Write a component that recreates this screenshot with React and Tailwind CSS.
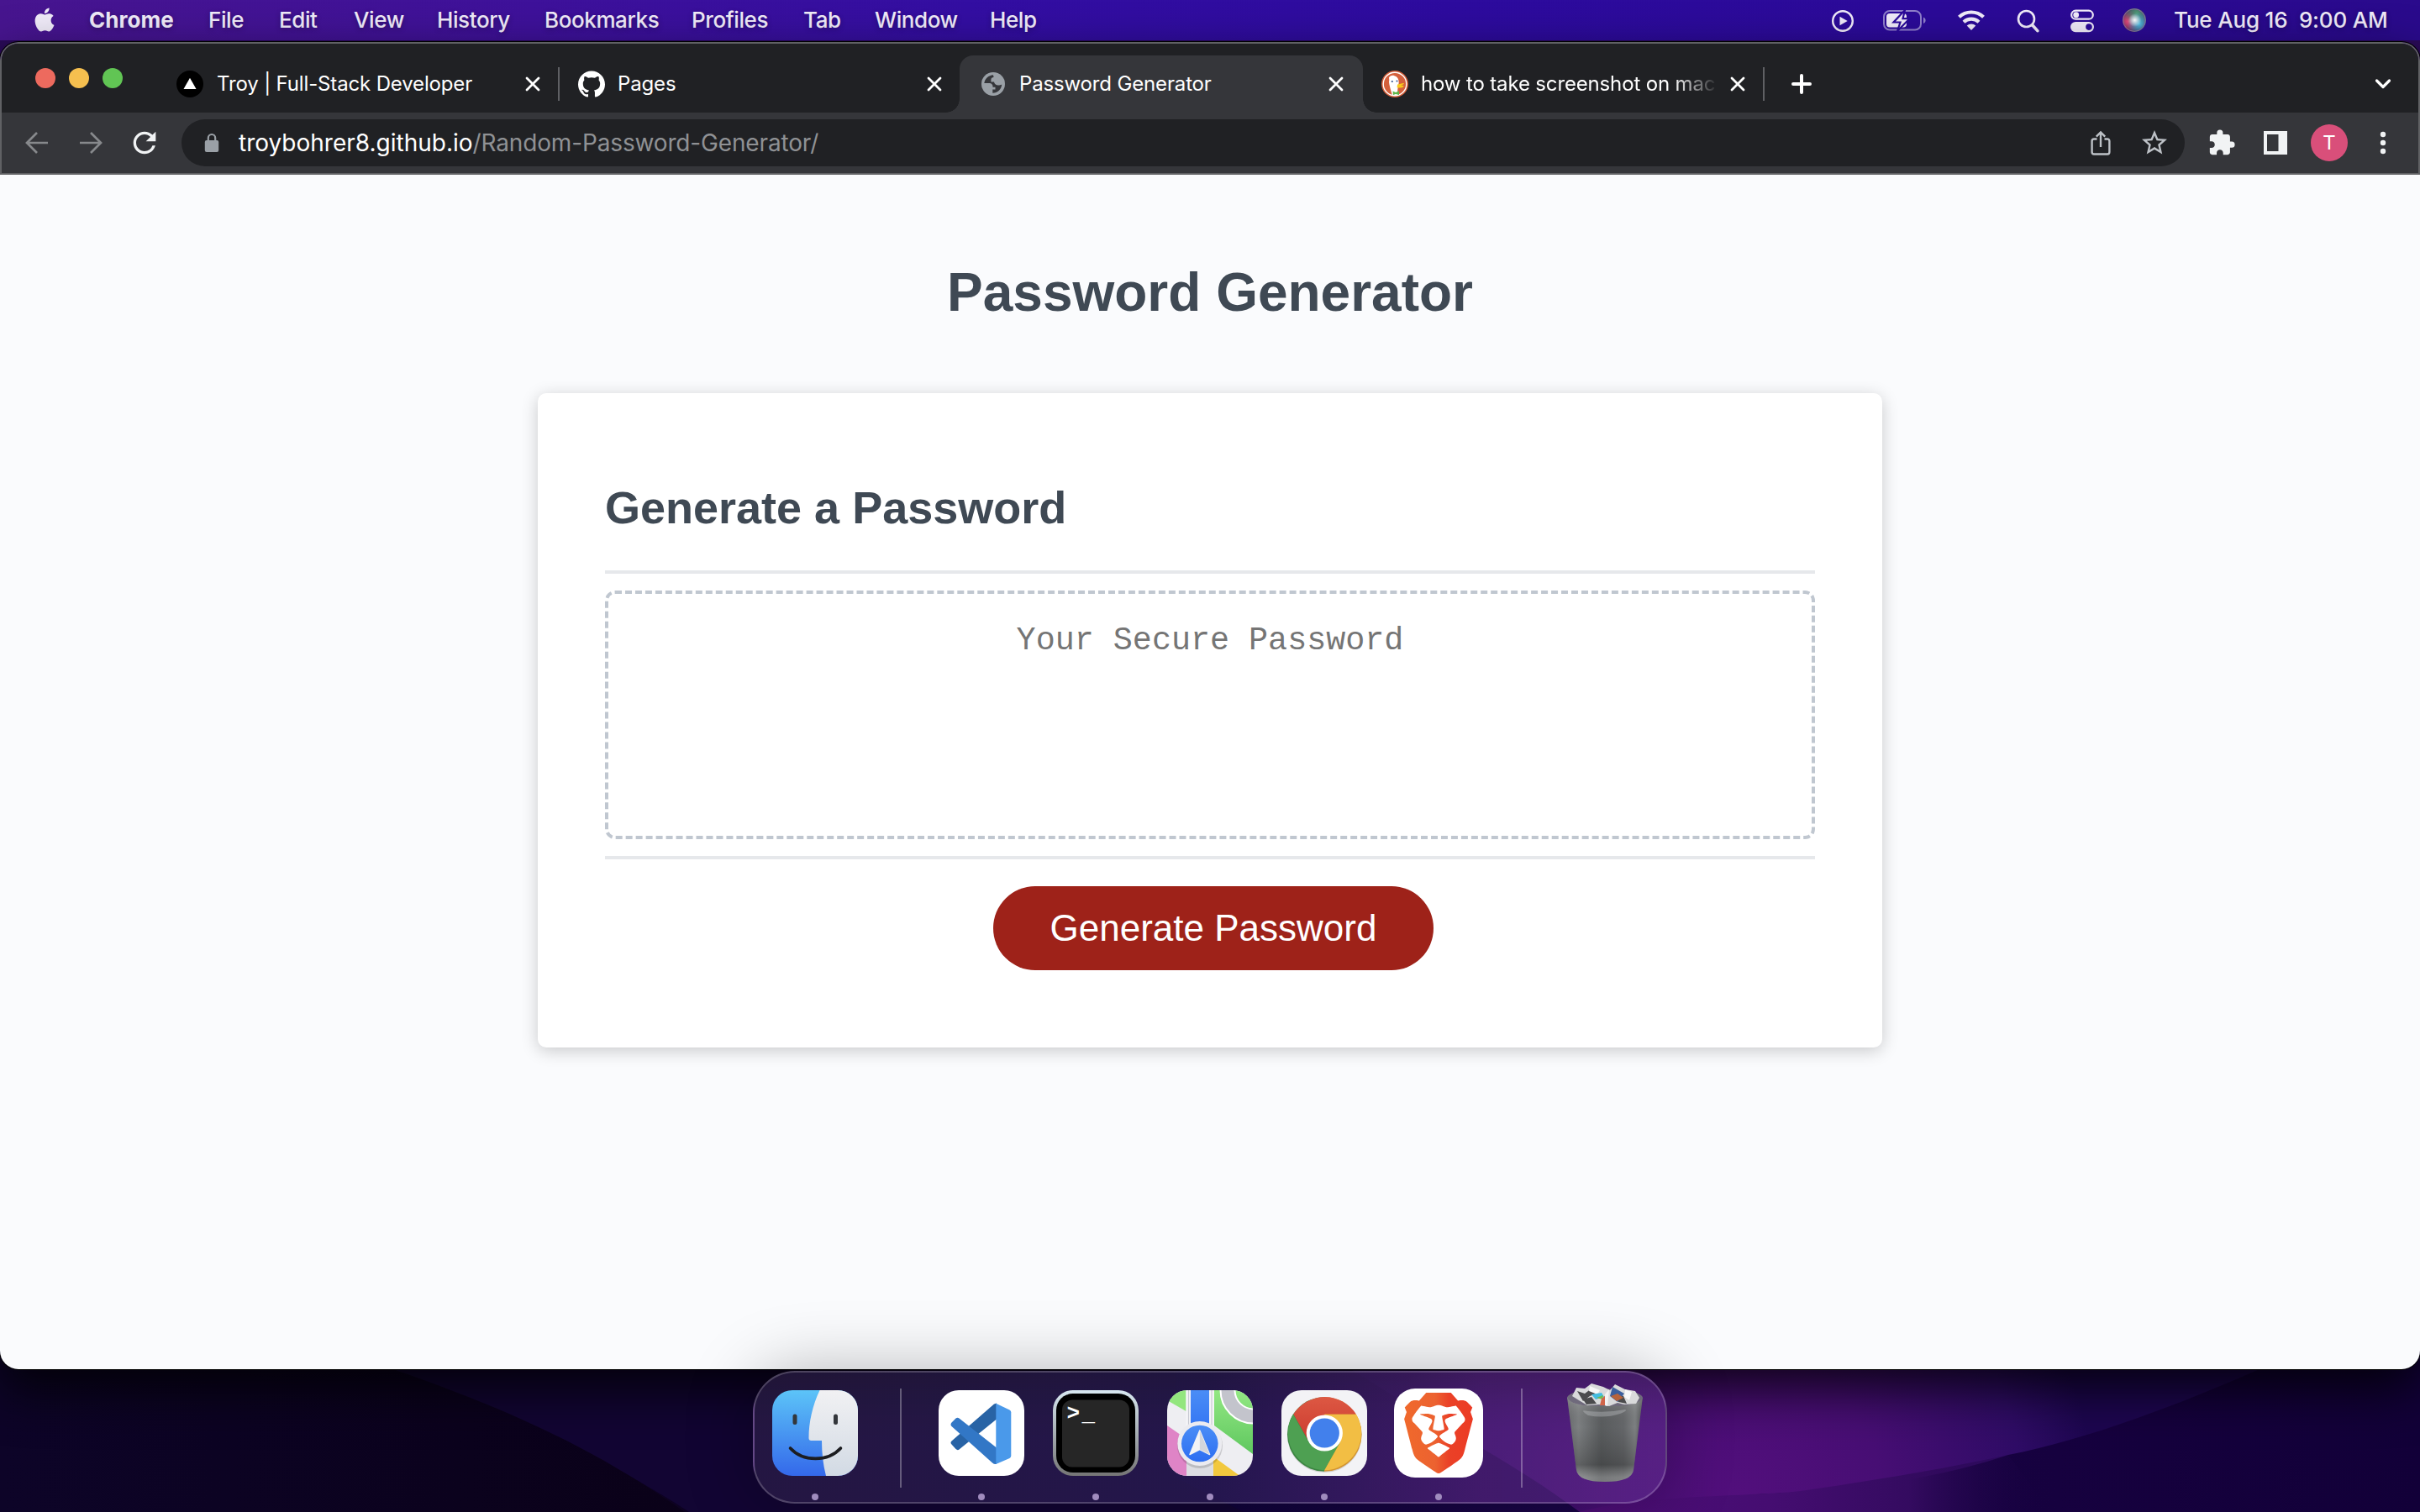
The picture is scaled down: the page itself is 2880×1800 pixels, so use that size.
import React from "react";
import { SiApple, SiGithub, SiBrave } from "react-icons/si";
import { MdExtension, MdRefresh, MdLock, MdStarBorder } from "react-icons/md";

function Wallpaper() {
  return (
    <svg className="absolute inset-0 h-[1800px] w-[2880px]" viewBox="0 0 2880 1800" aria-hidden="true">
      <defs>
        <linearGradient id="wp" x1="0" x2="1" y1="0" y2="0">
          <stop offset="0" stopColor="#0d0326" />
          <stop offset=".3" stopColor="#0d0221" />
          <stop offset=".5" stopColor="#10033a" />
          <stop offset=".64" stopColor="#1a0548" />
          <stop offset=".85" stopColor="#16013f" />
          <stop offset="1" stopColor="#120038" />
        </linearGradient>
        <linearGradient id="left" x1="0" x2="1" y1="0" y2="0">
          <stop offset="0" stopColor="#0d0428" />
          <stop offset="1" stopColor="#0a0118" />
        </linearGradient>
        <radialGradient id="glow" gradientUnits="userSpaceOnUse" cx="2070" cy="1780" r="420">
          <stop offset="0" stopColor="#520f7c" />
          <stop offset=".4" stopColor="#470e74" />
          <stop offset=".8" stopColor="#2f0c66" />
          <stop offset="1" stopColor="#1d0650" />
        </radialGradient>
        <linearGradient id="glow2" gradientUnits="userSpaceOnUse" x1="1880" x2="2440" y1="0" y2="0">
          <stop offset="0" stopColor="#4f0e79" />
          <stop offset=".4" stopColor="#450d71" />
          <stop offset=".7" stopColor="#340b60" />
          <stop offset="1" stopColor="#16013f" stopOpacity="0" />
        </linearGradient>
      </defs>
      <rect width="2880" height="1800" fill="url(#wp)" />
      <rect width="2880" height="100" fill="#2a0a58" />
      <path d="M410 1625C560 1670 640 1700 700 1730C750 1757 790 1780 820 1800H1480L1400 1760V1625Z" fill="#120533" />
      <path d="M0 1600H380C560 1660 680 1705 815 1800H0Z" fill="url(#left)" />
      <path d="M1600 1625H2700C2600 1670 2480 1715 2390 1732C2300 1762 2200 1775 2090 1779L2000 1800H1880C1800 1740 1700 1690 1600 1625Z" fill="url(#glow)" />
      <path d="M1880 1800C1960 1778 2100 1782 2150 1774C2260 1758 2330 1745 2390 1732L2440 1800Z" fill="url(#glow2)" />
    </svg>
  );
}

function Menu({ cell, children, bold }) {
  return (
    <div className={cell}>
      <span className={bold ? "font-bold tracking-[0.050px]" : "font-medium tracking-[-0.400px]"}>{children}</span>
    </div>
  );
}

function MenuBar() {
  return (
    <header className="relative flex h-[48px] items-start bg-[linear-gradient(90deg,#47158f_0%,#3e119a_22%,#330ea2_40%,#2d0b9e_60%,#2b0a98_80%,#2a0a8c_100%)] text-[#f0ebf9] [text-shadow:0_2px_6px_rgba(0,0,0,0.3)]">
      <div className="flex h-[47px] w-full items-center text-[26px] whitespace-nowrap">
        <div className="w-[106px] pl-[39px]">
          <SiApple className="h-[33px] w-[28px]" />
        </div>
        <Menu cell="w-[142px]" bold>Chrome</Menu>
        <Menu cell="w-[84px]">File</Menu>
        <Menu cell="w-[89px]">Edit</Menu>
        <Menu cell="w-[99px]">View</Menu>
        <Menu cell="w-[128px]">History</Menu>
        <Menu cell="w-[175px]">Bookmarks</Menu>
        <Menu cell="w-[133px]">Profiles</Menu>
        <Menu cell="w-[85px]">Tab</Menu>
        <Menu cell="w-[137px]">Window</Menu>
        <Menu cell="w-[120px]">Help</Menu>
        <div className="ml-auto flex h-[50px] items-center pt-[3px]">
          <svg className="mr-[34px] h-[28px] w-[28px]" viewBox="0 0 28 28" fill="none">
            <circle cx="14" cy="14" r="11.8" stroke="currentColor" strokeWidth="2.4" />
            <path d="M10.5 8.8v10.4l9.2-5.2z" fill="currentColor" />
          </svg>
          <svg className="mr-[36px] h-[26px] w-[52px]" viewBox="0 0 52 26" fill="none">
            <rect x="1" y="1" width="44" height="22.5" rx="7" stroke="#8f7fcb" strokeWidth="2" />
            <path d="M48 8.5c3.5 1.5 3.5 6 0 7.5z" fill="#8f7fcb" />
            <rect x="4" y="4" width="24" height="16.5" rx="4" fill="currentColor" />
            <path d="M26 0 12.5 14.5h8L17 25 31.5 10.2h-8z" fill="currentColor" stroke="#2b0a9a" strokeWidth="2.2" />
          </svg>
          <svg className="mr-[37px] h-[26px] w-[34px] -translate-y-px" viewBox="0 0 34 26" fill="none" stroke="currentColor" strokeWidth="4.2">
            <path d="M2.5 9.3a21 21 0 0 1 29 0" />
            <path d="M8 15.2a13 13 0 0 1 18 0" />
            <path d="M17 25 11.7 19.6a7.5 7.5 0 0 1 10.6 0z" fill="currentColor" stroke="none" />
          </svg>
          <svg className="mr-[37px] h-[28px] w-[27px]" viewBox="0 0 27 28" fill="none" stroke="currentColor" strokeLinecap="round">
            <circle cx="11.5" cy="11.5" r="9.5" strokeWidth="2.6" />
            <path d="m18.8 19 6 6.6" strokeWidth="3.6" />
          </svg>
          <svg className="mr-[34px] h-[28px] w-[28px]" viewBox="0 0 28 28" fill="none">
            <rect x="1.2" y="1.7" width="25.6" height="10" rx="5" stroke="currentColor" strokeWidth="2.2" />
            <circle cx="6.7" cy="6.7" r="3.4" fill="currentColor" />
            <rect x="0" y="15" width="28" height="12.2" rx="6.1" fill="currentColor" />
            <circle cx="22" cy="21.1" r="3.8" fill="#2b0a98" />
          </svg>
          <svg className="mr-[33px] h-[28px] w-[28px] -translate-y-px" viewBox="0 0 28 28">
            <defs>
              <radialGradient id="siriR" cx=".25" cy=".55" r=".5"><stop offset="0" stopColor="#f0487c" /><stop offset="1" stopColor="#f0487c" stopOpacity="0" /></radialGradient>
              <radialGradient id="siriG" cx=".6" cy=".2" r=".55"><stop offset="0" stopColor="#4f9a76" /><stop offset="1" stopColor="#4f9a76" stopOpacity="0" /></radialGradient>
              <radialGradient id="siriB" cx=".7" cy=".65" r=".5"><stop offset="0" stopColor="#53c4e8" /><stop offset="1" stopColor="#53c4e8" stopOpacity="0" /></radialGradient>
              <radialGradient id="siriW" cx=".52" cy=".5" r=".28"><stop offset="0" stopColor="#fff" /><stop offset="1" stopColor="#fff" stopOpacity="0" /></radialGradient>
            </defs>
            <circle cx="14" cy="14" r="14" fill="#3b2f58" />
            <circle cx="14" cy="14" r="14" fill="url(#siriR)" />
            <circle cx="14" cy="14" r="14" fill="url(#siriG)" />
            <circle cx="14" cy="14" r="14" fill="url(#siriB)" />
            <circle cx="14" cy="14" r="14" fill="url(#siriW)" />
            <circle cx="14" cy="14" r="13.3" fill="none" stroke="#8c6f9e" strokeWidth="1" />
          </svg>
        </div>
        <div className="w-[293px] font-medium tracking-[-0.180px] whitespace-pre">{"Tue Aug 16  9:00 AM"}</div>
      </div>
    </header>
  );
}

function Close({ className = "" }) {
  return (
    <svg className={"h-[18px] w-[18px] shrink-0 " + className} viewBox="0 0 18 18" stroke="#fff" strokeWidth="2.8" strokeLinecap="round">
      <path d="m2 2 14 14M16 2 2 16" />
    </svg>
  );
}

function Globe() {
  return (
    <svg className="h-[28px] w-[28px] shrink-0" viewBox="0 0 28 28">
      <circle cx="14" cy="14" r="14" fill="#9aa0a6" />
      <path d="M14 3.2c-5.5.3-10 4.6-10.7 9.8h6.2c2.6 0 4 1.7 4 4v.8h3v2.700h-3.200v4.300c6-.2 10.600-4.800 10.900-10.400-1.200.8-2.600 1.100-4.200 1.100-2.800 0-4.800-1.700-5-4h-3.600V9.200c0-2 1.200-3.200 3.200-3.200z" fill="#35363a" />
    </svg>
  );
}

function Duck() {
  return (
    <svg className="h-[32px] w-[32px] shrink-0" viewBox="0 0 32 32">
      <circle cx="16" cy="16" r="16" fill="#d4603c" />
      <circle cx="16" cy="16" r="13.8" fill="#d4603c" stroke="#fff" strokeWidth="1.4" />
      <path d="M9 8.5c1-2.5 4-3.3 6.5-2.3 3.5 1 5.2 4 5.2 7.8l-.6 5c-1 3-1.400 6 .2 10.300-3 .8-6 .4-7.500-.4C11.500 24 8 14 9.300 11.500z" fill="#fff" />
      <path d="M19 16.500c2.500-.2 5-1.600 7.800-1.500.6 1.200-2 2-3.300 2.600 1.300.3 2.500.1 3.300.8-1 2-5.500 2.700-8.200 1.800z" fill="#f8c91c" />
      <path d="M13.500 24.500 17 26l4-1.800v4.800L17 28l-3 1z" fill="#5fb64a" />
      <circle cx="12.8" cy="13" r="1.1" fill="#2d4f8e" />
      <circle cx="18.5" cy="12.6" r="1" fill="#2d4f8e" />
    </svg>
  );
}

function TabStrip() {
  return (
    <div className="flex h-[82px] items-end bg-[#202124] text-[24px] tracking-[-0.150px] whitespace-nowrap text-white">
      <div className="flex h-[82px] w-[206px] items-center gap-[16px] pl-[40px]">
        <span className="h-[24px] w-[24px] rounded-full bg-[#ed6a5e]" />
        <span className="h-[24px] w-[24px] rounded-full bg-[#f5bf4f]" />
        <span className="h-[24px] w-[24px] rounded-full bg-[#61c554]" />
      </div>
      <div className="flex h-[68px] w-[478px] items-center pl-[2px]">
        <svg className="h-[32px] w-[32px] shrink-0" viewBox="0 0 32 32">
          <circle cx="16" cy="16" r="16" fill="#000" />
          <path d="M16 8.8 23.5 22h-15z" fill="#fff" />
        </svg>
        <div className="ml-[16px] w-[367px]">Troy | Full-Stack Developer</div>
        <Close />
        <span className="ml-[21px] h-[40px] w-[2px] bg-[#5f6064]" />
      </div>
      <div className="flex h-[68px] w-[456px] items-center pl-[2px]">
        <SiGithub className="h-[32px] w-[32px] shrink-0" />
        <div className="ml-[15px] w-[368px]">Pages</div>
        <Close />
      </div>
      <div className="relative flex h-[68px] w-[480px] items-center rounded-t-[16px] bg-[#35363a] pl-[26px]">
        <span className="absolute bottom-0 -left-[16px] h-[16px] w-[16px] bg-[radial-gradient(circle_at_0_0,#202124_15.500px,#35363a_16px)]" />
        <span className="absolute -right-[16px] bottom-0 h-[16px] w-[16px] bg-[radial-gradient(circle_at_100%_0,#202124_15.500px,#35363a_16px)]" />
        <Globe />
        <div className="ml-[17px] w-[368px]">Password Generator</div>
        <Close />
      </div>
      <div className="flex h-[68px] w-[480px] items-center pl-[22px]">
        <Duck />
        <div className="ml-[15px] w-[352px] overflow-hidden [mask-image:linear-gradient(90deg,#000_300px,transparent_354px)]">how to take screenshot on mac</div>
        <Close className="ml-[16px]" />
        <span className="ml-[21px] h-[40px] w-[2px] bg-[#5f6064]" />
      </div>
      <div className="flex h-[68px] flex-1 items-center justify-between pr-[32px] pl-[28px]">
        <svg className="h-[28px] w-[28px]" viewBox="0 0 28 28" stroke="#fff" strokeWidth="4" strokeLinecap="round">
          <path d="M14 4v20M4 14h20" />
        </svg>
        <svg className="h-[14px] w-[20px]" viewBox="0 0 20 14" fill="none" stroke="#fff" strokeWidth="3.2" strokeLinecap="round" strokeLinejoin="round">
          <path d="m2.5 3 7.5 7.5L17.5 3" />
        </svg>
      </div>
    </div>
  );
}

function Toolbar() {
  return (
    <div className="flex h-[72px] items-center bg-[#35363a] pl-[27px]">
      <svg className="h-[30px] w-[30px]" viewBox="0 0 30 30" fill="none" stroke="#87898c" strokeWidth="2.7">
        <path d="M28 15H4M15 3 3 15l12 12" />
      </svg>
      <svg className="ml-[34px] h-[30px] w-[30px]" viewBox="0 0 30 30" fill="none" stroke="#87898c" strokeWidth="2.7">
        <path d="M2 15h24M15 3l12 12-12 12" />
      </svg>
      <MdRefresh className="ml-[29px] h-[40px] w-[40px] text-[#f1f3f4]" />
      <div className="ml-[24px] flex h-[56px] w-[2384px] items-center rounded-full bg-[#202124] whitespace-nowrap">
        <svg className="ml-[27px] h-[24px] w-[18px]" viewBox="0 0 18 24" fill="none">
          <rect x="0.800" y="9" width="16.400" height="14" rx="2" fill="#9aa0a6" />
          <path d="M4.800 10V6.200a4.200 4.200 0 0 1 8.400 0V10" stroke="#9aa0a6" strokeWidth="2.200" />
        </svg>
        <div className="ml-[23px] flex-1 text-[28px] text-[#8f9194]">
          <span className="text-white">troybohrer8.github.io</span>
          <span className="tracking-[-0.150px]">/Random-Password-Generator/</span>
        </div>
        <svg className="h-[32px] w-[24px]" viewBox="0 0 24 32" fill="none" stroke="#bdc1c6" strokeWidth="2.4">
          <path d="M7.5 11.5H4a2.4 2.4 0 0 0-2.4 2.4v13.200A2.400 2.400 0 0 0 4 29.500h16a2.400 2.400 0 0 0 2.400-2.400V13.900a2.400 2.400 0 0 0-2.400-2.400h-3.500M12 21V4M6.800 8.600 12 3.400l5.200 5.200" />
        </svg>
        <MdStarBorder className="mr-[18px] ml-[34px] h-[36px] w-[36px] text-[#bdc1c6]" />
      </div>
      <MdExtension className="ml-[27px] h-[34px] w-[34px] text-[#f1f3f4]" />
      <svg className="ml-[33px] h-[28px] w-[28px]" viewBox="0 0 28 28">
        <path fillRule="evenodd" d="M0 0h28v28H0zM4 4v20h13.5V4z" fill="#f1f3f4" />
      </svg>
      <div className="ml-[28px] flex h-[44px] w-[44px] items-center justify-center rounded-full bg-[#d94f7a] font-[Roboto] text-[24px] text-white">T</div>
      <svg className="ml-[38px] h-[28px] w-[8px]" viewBox="0 0 8 28" fill="#f1f3f4">
        <circle cx="4" cy="4" r="3.2" /><circle cx="4" cy="14" r="3.2" /><circle cx="4" cy="24" r="3.2" />
      </svg>
    </div>
  );
}

function Page() {
  return (
    <main className="flex h-[1422px] flex-col items-center bg-[#fafbfd] font-['Liberation_Sans',Arial,sans-serif] text-[#3f4954]">
      <h1 className="mt-[103px] h-[74px] text-[64px] leading-[74px] font-bold whitespace-nowrap">Password Generator</h1>
      <section className="mt-[83px] flex h-[779px] w-[1600px] flex-col items-center rounded-[10px] bg-white px-[80px] shadow-[0_4px_20px_rgba(0,0,0,0.2)]">
        <h2 className="mt-[104px] h-[64px] w-full text-[54px] leading-[64px] font-bold">Generate a Password</h2>
        <div className="mt-[43px] h-[4px] w-full bg-[#e6e8eb]" />
        <div className="mt-[20px] h-[296px] w-full rounded-[12px] border-4 border-dashed border-[#c0c7d0] pt-[36px] text-center font-['Liberation_Mono',monospace] text-[38.4px] leading-[40px] text-[#757575]">
          Your Secure Password
        </div>
        <div className="mt-[20px] h-[4px] w-full bg-[#e6e8eb]" />
        <button className="mt-[32px] ml-[8px] h-[100px] w-[524px] rounded-full bg-[#9e2219] text-[44px] leading-[50px] whitespace-nowrap text-white">Generate Password</button>
      </section>
    </main>
  );
}

function Finder() {
  return (
    <svg className="h-[102px] w-[102px]" viewBox="0 0 102 102">
      <defs>
        <clipPath id="fc"><rect width="102" height="102" rx="24" /></clipPath>
        <linearGradient id="fb" x2="0" y2="1"><stop offset="0" stopColor="#5cc4f8" /><stop offset="1" stopColor="#3468ea" /></linearGradient>
        <linearGradient id="fw" x2="0" y2="1"><stop offset="0" stopColor="#f1f1f3" /><stop offset="1" stopColor="#d2dae4" /></linearGradient>
      </defs>
      <g clipPath="url(#fc)">
        <rect width="102" height="102" fill="url(#fb)" />
        <path d="M56.6 0C48 18 43.5 38 43.5 57q0 3 3 3H59c0 15 1.5 28 5 42h40V0z" fill="url(#fw)" />
      </g>
      <path d="M27 31v7.5M75.5 31v7.5" stroke="#33363b" strokeWidth="5" strokeLinecap="round" />
      <path d="M21.5 69c15 16.5 45 16.5 60 0" fill="none" stroke="#1c1d20" strokeWidth="3.6" strokeLinecap="round" />
    </svg>
  );
}

function VSCode() {
  return (
    <svg className="h-[102px] w-[102px]" viewBox="0 0 102 102">
      <rect width="102" height="102" rx="24" fill="#fff" />
      <path d="M66 16.5 15.5 60.5q-2 2 0 4l5 5.5q2 2 4 .5L69 34.5V15.5z" fill="#2863a5" />
      <path d="M24.5 33.5 69 68.5v19.5q-3 .5-5-1.5L15.5 43q-2-2 0-4.5l5-5q2-1.6 4 0z" fill="#3277c6" />
      <path d="M68.3 15.8 84.5 23.5q1.8 1 1.8 3v51.5q0 2-1.8 3L68.3 88z" fill="#4a99ea" />
    </svg>
  );
}

function Terminal() {
  return (
    <svg className="h-[102px] w-[102px]" viewBox="0 0 102 102">
      <defs><linearGradient id="tg" x2="0" y2="1"><stop offset="0" stopColor="#d7e7f0" /><stop offset="1" stopColor="#757575" /></linearGradient></defs>
      <rect width="102" height="102" rx="24" fill="url(#tg)" />
      <rect x="4" y="4" width="94" height="94" rx="20" fill="#000" />
      <rect x="11" y="11.5" width="80" height="80" rx="12" fill="#262626" />
      <g fill="#fff" fontFamily="Liberation Mono, monospace" fontWeight="700">
        <text x="16.5" y="35" fontSize="26">&gt;</text>
        <text x="34.5" y="35.5" fontSize="26">_</text>
      </g>
    </svg>
  );
}

function Maps() {
  return (
    <svg className="h-[102px] w-[102px]" viewBox="0 0 102 102">
      <defs>
        <clipPath id="mc"><rect width="102" height="102" rx="24" /></clipPath>
        <linearGradient id="mg" x2="0" y2="1"><stop offset="0" stopColor="#93e883" /><stop offset="1" stopColor="#5fc75f" /></linearGradient>
        <linearGradient id="mb" x2="0" y2="1"><stop offset="0" stopColor="#4a8df6" /><stop offset="1" stopColor="#2c6ef2" /></linearGradient>
      </defs>
      <g clipPath="url(#mc)">
        <rect width="102" height="102" fill="#eeeef2" />
        <path d="M0 0h22.5v25L0 12z" fill="#93e67e" />
        <path d="M0 42 23 58v44H0z" fill="#df84c6" />
        <path d="M56 0h46v76L56 42z" fill="url(#mg)" />
        <path d="M55 79 88 103H55z" fill="#f2c83e" />
        <path d="M23 62h32v40H23z" fill="#dcdde2" />
        <path d="M22.5 0H56v60H22.5z" fill="#f4f4f7" />
        <path d="M25.5 0v60M53 0v60" stroke="#c9cad2" strokeWidth="1.2" />
        <path d="M28 0h22v60H28z" fill="url(#mb)" />
        <circle cx="103" cy="0" r="31" fill="none" stroke="#fff" strokeWidth="19" />
        <circle cx="103" cy="0" r="31" fill="none" stroke="#c3c4cc" strokeWidth="15" />
      </g>
      <circle cx="39" cy="66" r="27" fill="#000" opacity=".15" />
      <circle cx="38.8" cy="63.5" r="26.5" fill="#ebebf0" />
      <circle cx="38.8" cy="63.5" r="21.8" fill="url(#mb)" />
      <path d="M38.8 48 27 76.5l11.8-6 11.8 6z" fill="#f2f3f5" stroke="#f2f3f5" strokeWidth="1.5" strokeLinejoin="round" />
      <path d="M38.8 48v22.5l11.8 6z" fill="#d3d6dc" />
    </svg>
  );
}

function ChromeIcon() {
  return (
    <svg className="h-[102px] w-[102px]" viewBox="0 0 102 102">
      <defs>
        <linearGradient id="cr" x2="0" y2="1"><stop offset="0" stopColor="#dd5843" /><stop offset="1" stopColor="#cb3b2f" /></linearGradient>
        <linearGradient id="cs"><stop offset=".5" stopColor="#3c8542" /><stop offset=".5" stopColor="#d3932f" /></linearGradient>
      </defs>
      <rect width="102" height="102" rx="24" fill="#f3f3f6" />
      <circle cx="51.3" cy="53.8" r="44.3" fill="#3a3a2a" opacity=".18" />
      <circle cx="51.3" cy="52.5" r="44.3" fill="url(#cs)" />
      <path d="M51.3 95.3A44.3 44.3 0 0 1 14 28.5L32.5 62 51.3 51 70 62z" fill="#4ea052" />
      <path d="M88.9 28.5A44.3 44.3 0 0 1 51.3 95.3L70 62 51.3 51V28.5z" fill="#f2be44" />
      <path d="M14.3 28.5a44.3 44.3 0 0 1 74.6 0H51.3V51L32 60z" fill="url(#cr)" />
      <circle cx="51.3" cy="51" r="21.6" fill="#fff" />
      <circle cx="51.3" cy="51" r="17.6" fill="#4280ec" />
    </svg>
  );
}

function Brave() {
  return (
    <div className="flex h-[106px] w-[106px] items-center justify-center rounded-[25px] bg-white">
      <svg className="absolute h-0 w-0" aria-hidden="true">
        <defs><linearGradient id="bg" x1="0" x2="1"><stop offset="0" stopColor="#f0692c" /><stop offset=".45" stopColor="#ec6230" /><stop offset=".65" stopColor="#ea4127" /><stop offset="1" stopColor="#ec3b24" /></linearGradient></defs>
      </svg>
      <SiBrave className="h-[96px] w-[96px] fill-[url(#bg)]" />
    </div>
  );
}

function Trash() {
  return (
    <svg className="h-[120px] w-[92px]" viewBox="0 0 92 120">
      <defs>
        <linearGradient id="tb"><stop offset="0" stopColor="#6b6d70" /><stop offset=".15" stopColor="#808385" /><stop offset=".45" stopColor="#5b5e60" /><stop offset=".75" stopColor="#67696c" /><stop offset=".9" stopColor="#818486" /><stop offset="1" stopColor="#4f5254" /></linearGradient>
        <linearGradient id="td" x2="0" y2="1"><stop offset="0" stopColor="#bbb" stopOpacity=".35" /><stop offset=".35" stopColor="#333" stopOpacity=".05" /><stop offset=".8" stopColor="#222" stopOpacity=".35" /><stop offset=".95" stopColor="#bbb" stopOpacity=".3" /></linearGradient>
      </defs>
      <ellipse cx="46" cy="18" rx="45" ry="10.5" fill="#6f6a7c" />
      <path d="M1 17 12 104q2 14 34 14t34-14L91 17Q88 28 46 28T1 17z" fill="url(#tb)" />
      <path d="M1 17 12 104q2 14 34 14t34-14L91 17Q88 28 46 28T1 17z" fill="url(#td)" />
      <path d="M26 39q20 4 38-2 10-4 6-5-20 4-44 2-12-3 0 5z" fill="#c9cbcd" opacity=".35" />
      <path d="m7 16 5-10 10 1 8-6 14 4 8 4 6-7 12 6 12 2 5 8-4 7-14 1-8-2-10 4-12-2-14 1-10-6z" fill="#d9dadb" />
      <path d="m13 10 9 3 8-6 8 5-10 4-8 6zM56 11l6 12 10 2-4-9zM20 20l10-3 6 8-12 1z" fill="#4b4b4d" />
      <path d="m28 4 12 5-3 5-10-4zM70 8l8 3-3 10-6-4z" fill="#f7f7f7" />
      <path d="m30 14 12-2 3 5-10 3z" fill="#43bde0" />
      <path d="m36 18 8-3-1 5z" fill="#71bb50" />
      <path d="m55 5 14 8-8 10-9-7z" fill="#3c5f9d" />
      <path d="m53 16 8-3 7 5-8 4z" fill="#b8633a" />
      <path d="m42 19 5-4-1 12h-6z" fill="#d0654a" />
      <path d="m46 14 5-6-2 20-3-1z" fill="#f2f2f2" />
    </svg>
  );
}

function DockItem({ className, children, running }) {
  return (
    <div className={"flex h-[154px] shrink-0 flex-col items-center " + className}>
      <div className="flex h-[144px] items-center">{children}</div>
      {running && <span className="h-[8px] w-[8px] rounded-full bg-[#a08cbe]" />}
    </div>
  );
}

function Dock() {
  return (
    <div className="relative flex h-[170px] justify-center pt-[2px]">
      <nav className="flex h-[158px] w-[1088px] items-start rounded-[50px] border-2 border-white/20 bg-[linear-gradient(90deg,rgba(48,34,76,0.62)_0%,rgba(48,34,90,0.62)_50%,rgba(90,40,130,0.62)_80%,rgba(94,44,140,0.6)_100%)] shadow-[0_0_80px_0_rgba(0,0,0,0.28)]">
        <DockItem className="ml-[20px] w-[104px]" running><Finder /></DockItem>
        <span className="mt-[19px] ml-[49px] h-[118px] w-[2px] bg-white/30" />
        <DockItem className="ml-[43px] w-[104px]" running><VSCode /></DockItem>
        <DockItem className="ml-[32px] w-[104px]" running><Terminal /></DockItem>
        <DockItem className="ml-[32px] w-[104px]" running><Maps /></DockItem>
        <DockItem className="ml-[32px] w-[104px]" running><ChromeIcon /></DockItem>
        <DockItem className="ml-[31px] w-[106px]" running><Brave /></DockItem>
        <span className="mt-[19px] ml-[45px] h-[118px] w-[2px] bg-white/30" />
        <DockItem className="ml-[52px] w-[92px]"><Trash /></DockItem>
      </nav>
    </div>
  );
}

export default function App() {
  return (
    <div className="relative flex h-[1800px] w-[2880px] flex-col overflow-hidden bg-[#0d0326] font-[Inter,sans-serif]">
      <Wallpaper />
      <MenuBar />
      <div className="relative mt-[2px] h-[1580px] shrink-0 overflow-hidden rounded-[22px] shadow-[0_0_0_1px_#000,0_24px_60px_0_rgba(0,0,0,0.8)]">
        <div className="h-[158px] overflow-hidden rounded-t-[22px] border-2 border-[#606164]">
          <TabStrip />
          <Toolbar />
        </div>
        <Page />
      </div>
      <Dock />
    </div>
  );
}
